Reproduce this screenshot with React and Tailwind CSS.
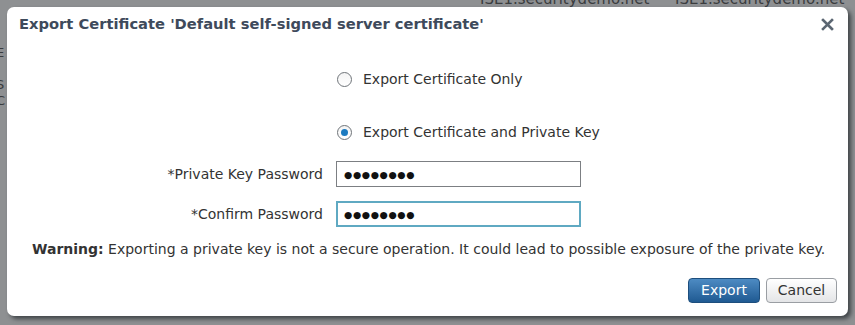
import { useState } from "react";

function Radio({ checked, label, onClick }) {
  return (
    <label onClick={onClick} className="flex items-center gap-[11px] cursor-pointer h-[17px]">
      <span className="w-[15px] h-[15px] rounded-full border border-[#6f7479] bg-gradient-to-b from-[#f4f4f4] to-white flex items-center justify-center">
        {checked && <span className="w-[7px] h-[7px] rounded-full bg-[#1b7ac0]" />}
      </span>
      <span>{label}</span>
    </label>
  );
}

function Field({ label, focused }) {
  return (
    <div className="flex items-center">
      <div className="w-[329px] text-right pr-[13px]">{label}</div>
      <div
        className={
          focused
            ? "w-[245px] h-[26px] border-2 border-[#5fa9c2] bg-white flex items-center pl-[6px]"
            : "w-[245px] h-[26px] border border-[#7c7f83] bg-white flex items-center pl-[7px]"
        }
      >
        <span className="text-[9.5px] tracking-[0.6px] text-[#111]">●●●●●●●●</span>
      </div>
    </div>
  );
}

export default function App() {
  const [mode, setMode] = useState("key");

  return (
    <div
      className="relative w-[855px] h-[325px] overflow-hidden bg-[#8e9092] pt-[7px] pl-[7px] text-[14px] leading-[17px] text-[#333]"
      style={{ fontFamily: '"DejaVu Sans", Verdana, sans-serif' }}
    >
      {/* page behind the overlay */}
      <div className="absolute top-[-9px] left-[480px] text-[15px] text-[#3a3c3e] whitespace-nowrap">ISE1.securitydemo.net</div>
      <div className="absolute top-[-9px] left-[675px] text-[15px] text-[#3a3c3e] whitespace-nowrap">ISE1.securitydemo.net</div>
      <div className="absolute top-[45px] left-[-4px] flex flex-col text-[13px] leading-[16px] text-[#3a3c3e]">
        <span>E</span>
        <span>I</span>
        <span>S</span>
        <span>C</span>
      </div>

      <div className="relative w-[841px] h-[309px] bg-white rounded-[7px] shadow-[3px_3px_4px_rgba(40,45,50,0.75)] flex flex-col">
        <div className="flex items-center justify-between h-[20px] mt-[7px] pl-[12px] pr-[14px]">
          <h1 className="text-[14.7px] leading-[20px] font-bold text-[#3e4a5b]">
            Export Certificate 'Default self-signed server certificate'
          </h1>
          <svg width="13" height="13" viewBox="0 0 13 13">
            <path d="M2 2 L11 11 M11 2 L2 11" stroke="#5b6672" strokeWidth="2.6" strokeLinecap="square" />
          </svg>
        </div>

        <div className="flex flex-col pl-[330px] pt-[37px] gap-[36px]">
          <Radio checked={mode === "cert"} label="Export Certificate Only" onClick={() => setMode("cert")} />
          <Radio checked={mode === "key"} label="Export Certificate and Private Key" onClick={() => setMode("key")} />
        </div>

        <div className="flex flex-col gap-[14px] pt-[20px]">
          <Field label="*Private Key Password" />
          <Field label="*Confirm Password" focused />
        </div>

        <p className="pl-[25px] pt-[14px] whitespace-nowrap">
          <span className="font-bold">Warning:</span> Exporting a private key is not a secure operation. It could lead to possible exposure of the private key.
        </p>

        <div className="flex justify-end gap-[6px] pr-[11px] pt-[20px]">
          <button className="w-[72px] h-[25px] rounded-[4px] border border-[#1d4e7d] bg-gradient-to-b from-[#4d8bc3] to-[#1f5a92] text-white text-[14px] leading-[17px]">
            Export
          </button>
          <button className="w-[71px] h-[25px] rounded-[4px] border border-[#9a9ea3] bg-gradient-to-b from-white to-[#e4e5e7] text-[#333] text-[14px] leading-[17px]">
            Cancel
          </button>
        </div>
      </div>
    </div>
  );
}
